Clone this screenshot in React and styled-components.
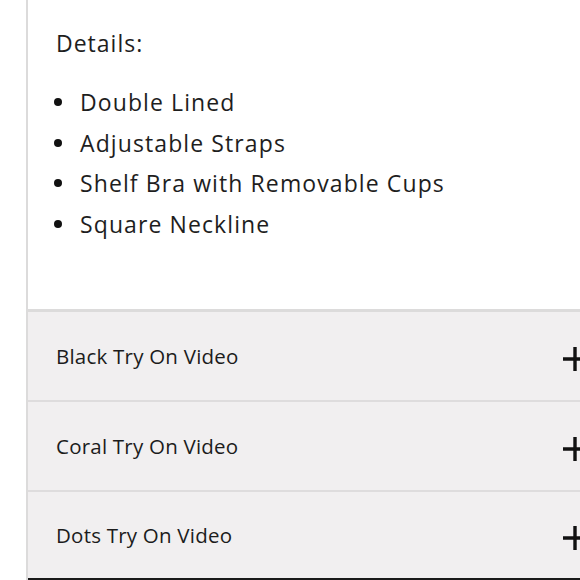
import React from "react";
import styled, { createGlobalStyle } from "styled-components";

const Global = createGlobalStyle`
  html, body { margin: 0; padding: 0; overflow: hidden; background: #fff; }
  body { font-family: "Open Sans", "Noto Sans", sans-serif; color: #1e1e1e; }
`;

const Page = styled.div`
  width: 600px;
  height: 580px;
  padding-left: 26px;
  box-sizing: border-box;
  display: flex;
  overflow: hidden;
`;

const Panel = styled.div`
  flex: 1;
  border-left: 2px solid #dcdbdb;
  display: flex;
  flex-direction: column;
`;

const Details = styled.section`
  height: 309px;
  box-sizing: border-box;
  padding: 23px 0 0 28px;
  background: #fff;
`;

const Heading = styled.p`
  margin: 0 0 19px;
  font-size: 23px;
  letter-spacing: 1px;
  line-height: 40px;
`;

const List = styled.ul`
  margin: 0;
  padding: 0;
  list-style: none;
`;

const Item = styled.li`
  display: flex;
  align-items: center;
  font-size: 23px;
  line-height: 40.5px;
  letter-spacing: 1.1px;
  &::before {
    content: "";
    width: 8px;
    height: 8px;
    border-radius: 50%;
    background: #111;
    margin: 0 18px 0 -2px;
    flex-shrink: 0;
  }
`;

const Accordion = styled.div`
  border-top: 3px solid #dcdbdb;
  background: #f1eff0;
  flex: 1;
  display: flex;
  flex-direction: column;
  border-bottom: 2px solid #1a1a1a;
`;

const Row = styled.div`
  height: ${(p) => p.$h}px;
  flex-shrink: 0;
  box-sizing: border-box;
  display: flex;
  align-items: center;
  justify-content: space-between;
  padding: 0 13px 0 28px;
  border-bottom: ${(p) => (p.$last ? "none" : "2px solid #dedcdd")};
`;

const Title = styled.span`
  font-size: 20.5px;
  letter-spacing: 0.22px;
  color: #1c1c1c;
`;

const Plus = styled.svg`
  width: 24px;
  height: 24px;
  margin-top: 6px;
  flex-shrink: 0;
`;

const PlusIcon = () => (
  <Plus viewBox="0 0 24 24">
    <path d="M0 12H24M12 0V24" stroke="#111" strokeWidth="3.4" fill="none" />
  </Plus>
);

const items = [
  "Double Lined",
  "Adjustable Straps",
  "Shelf Bra with Removable Cups",
  "Square Neckline",
];

const rows = ["Black Try On Video", "Coral Try On Video", "Dots Try On Video"];

export default function App() {
  return (
    <>
      <Global />
      <Page>
        <Panel>
          <Details>
            <Heading>Details:</Heading>
            <List>
              {items.map((t) => (
                <Item key={t}>{t}</Item>
              ))}
            </List>
          </Details>
          <Accordion>
            {rows.map((t, i) => (
              <Row key={t} $h={i === 2 ? 86 : 90} $last={i === 2}>
                <Title>{t}</Title>
                <PlusIcon />
              </Row>
            ))}
          </Accordion>
        </Panel>
      </Page>
    </>
  );
}
